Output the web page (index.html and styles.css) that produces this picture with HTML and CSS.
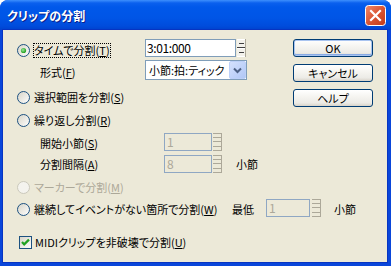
FILE: index.html
```html
<!DOCTYPE html>
<html lang="ja">
<head>
<meta charset="utf-8">
<title>クリップの分割</title>
<link rel="stylesheet" href="styles.css">
</head>
<body>
<svg class="defs" width="0" height="0" aria-hidden="true">
  <defs>
    <linearGradient id="rg" x1="0" y1="0" x2="1" y2="1">
      <stop offset="0" stop-color="#D6D3C6"/>
      <stop offset="1" stop-color="#FFFFFF"/>
    </linearGradient>
    <radialGradient id="dot" cx="0.4" cy="0.4" r="0.6">
      <stop offset="0" stop-color="#9BE89B"/>
      <stop offset="1" stop-color="#1E9E1E"/>
    </radialGradient>
    <linearGradient id="closeg" x1="0" y1="0" x2="1" y2="1">
      <stop offset="0" stop-color="#F08A6C"/>
      <stop offset="0.5" stop-color="#DA5533"/>
      <stop offset="1" stop-color="#C23A17"/>
    </linearGradient>
    <linearGradient id="ddg" x1="0" y1="0" x2="1" y2="1">
      <stop offset="0" stop-color="#D5E2FD"/>
      <stop offset="1" stop-color="#AFC6F6"/>
    </linearGradient>
  </defs>
</svg>
<div class="window">
  <div class="titlebar">
    <span class="title">クリップの分割</span>
    <svg class="close" width="21" height="21" viewBox="0 0 21 21">
      <rect x="0.5" y="0.5" width="20" height="20" rx="3" fill="url(#closeg)" stroke="#FFFFFF"/>
      <path d="M6 6 L15 15 M15 6 L6 15" stroke="#FFFFFF" stroke-width="2.2" stroke-linecap="square"/>
    </svg>
  </div>
  <div class="client">
    <div class="top">
      <div class="top-left">
        <div class="row r1">
          <div class="opt w128">
            <svg class="radio" width="13" height="13" viewBox="0 0 13 13"><circle cx="6.5" cy="6.5" r="6" fill="url(#rg)" stroke="#1C5180"/><circle cx="6.5" cy="6.5" r="2.6" fill="url(#dot)"/></svg>
            <span class="lbl focus">タイムで分割(<u>T</u>)</span>
          </div>
          <div class="edit w91">3:01:000</div>
          <svg class="spin" width="9" height="18" viewBox="0 0 9 18">
            <rect x="0" y="0" width="9" height="18" fill="#F3F2EC"/>
            <path d="M0 0.5 H9 M0 8.5 H9 M0 9.5 H9 M0 17.5 H9" stroke="#FFFFFF"/>
            <path d="M2 4.5 H7 M2 13.5 H7 M0 8.5 H9" stroke="#404040"/>
            <path d="M8.5 0 V18" stroke="#ACA899"/>
          </svg>
        </div>
        <div class="row r2">
          <div class="ind w128"><span class="lbl">形式(<u>F</u>)</span></div>
          <div class="select">
            <span class="seltext">小節:拍:ティック</span>
            <svg class="ddbtn" width="17" height="18" viewBox="0 0 17 18">
              <rect x="0.5" y="0.5" width="16" height="17" rx="1.5" fill="url(#ddg)" stroke="#BCD0F8"/>
              <path d="M5 7.5 L8.5 11 L12 7.5" stroke="#4D6185" stroke-width="2" fill="none"/>
            </svg>
          </div>
        </div>
        <div class="row r3">
          <div class="opt">
            <svg class="radio" width="13" height="13" viewBox="0 0 13 13"><circle cx="6.5" cy="6.5" r="6" fill="url(#rg)" stroke="#1C5180"/></svg>
            <span class="lbl">選択範囲を分割(<u>S</u>)</span>
          </div>
        </div>
      </div>
      <div class="buttons">
        <div class="btn default">OK</div>
        <div class="btn">キャンセル</div>
        <div class="btn">ヘルプ</div>
      </div>
    </div>

    <div class="row r4">
      <div class="opt">
        <svg class="radio" width="13" height="13" viewBox="0 0 13 13"><circle cx="6.5" cy="6.5" r="6" fill="url(#rg)" stroke="#1C5180"/></svg>
        <span class="lbl">繰り返し分割(<u>R</u>)</span>
      </div>
    </div>
    <div class="row r5">
      <div class="ind w147"><span class="lbl">開始小節(<u>S</u>)</span></div>
      <div class="edit disabled w48">1</div>
      <svg class="spin sp1" width="9" height="18" viewBox="0 0 9 18">
        <path d="M0 0.5 H8 M0 4.5 H8 M0 8.5 H8 M0 13.5 H8 M0 17.5 H8 M8.5 0 V18" stroke="#ACA899"/>
      </svg>
    </div>
    <div class="row r6">
      <div class="ind w147"><span class="lbl">分割間隔(<u>A</u>)</span></div>
      <div class="edit disabled w48">8</div>
      <svg class="spin sp1" width="9" height="18" viewBox="0 0 9 18">
        <path d="M0 0.5 H8 M0 4.5 H8 M0 8.5 H8 M0 13.5 H8 M0 17.5 H8 M8.5 0 V18" stroke="#ACA899"/>
      </svg>
      <span class="lbl unit1">小節</span>
    </div>
    <div class="row r7">
      <div class="opt">
        <svg class="radio" width="13" height="13" viewBox="0 0 13 13"><circle cx="6.5" cy="6.5" r="6" fill="#F4F3EE" stroke="#CAC8BB"/></svg>
        <span class="lbl dim">マーカーで分割(<u>M</u>)</span>
      </div>
    </div>
    <div class="row r8">
      <div class="opt w214">
        <svg class="radio" width="13" height="13" viewBox="0 0 13 13"><circle cx="6.5" cy="6.5" r="6" fill="url(#rg)" stroke="#1C5180"/></svg>
        <span class="lbl">継続してイベントがない箇所で分割(<u>W</u>)</span>
      </div>
      <span class="lbl w33">最低</span>
      <div class="edit disabled w44">1</div>
      <svg class="spin sp2" width="9" height="18" viewBox="0 0 9 18">
        <path d="M0 0.5 H8 M0 4.5 H8 M0 8.5 H8 M0 13.5 H8 M0 17.5 H8 M8.5 0 V18" stroke="#ACA899"/>
      </svg>
      <span class="lbl unit2">小節</span>
    </div>
    <div class="row r9">
      <svg class="check" width="13" height="13" viewBox="0 0 13 13">
        <rect x="0.5" y="0.5" width="12" height="12" fill="url(#rg)" stroke="#1C5180"/>
        <path d="M3 6 L5.2 8.4 L10 3.6" stroke="#21A121" stroke-width="2.2" fill="none"/>
      </svg>
      <span class="lbl cklbl">MIDIクリップを非破壊で分割(<u>U</u>)</span>
    </div>
  </div>
</div>
</body>
</html>
```

FILE: styles.css
```css
html, body {
  margin: 0;
  padding: 0;
  background: #FFFFFF;
}

body {
  font-family: "Noto Sans CJK JP", "Noto Sans", sans-serif;
  font-size: 11px;
  font-feature-settings: "palt";
  color: #000000;
}

.defs {
  display: block;
  width: 0;
  height: 0;
  overflow: hidden;
}

.window {
  width: 391px;
  height: 266px;
  display: flex;
  flex-direction: column;
  background: #0A46DA;
  border-radius: 8px 8px 0 0;
  overflow: hidden;
}

.titlebar {
  flex: none;
  height: 30px;
  box-sizing: border-box;
  display: flex;
  align-items: center;
  padding: 0 5px 0 7px;
  background: linear-gradient(to bottom, #3D8FFD 0, #0A60EE 3px, #0058EA 7px, #0055E6 18px, #004CDC 26px, #0042CC 30px);
}

.title {
  flex: 1;
  color: #FFFFFF;
  font-weight: bold;
  font-size: 12px;
  line-height: 15px;
  margin-top: 1px;
  text-shadow: 1px 1px 0 #0B1F8A;
}

.close {
  display: block;
  flex: none;
}

.client {
  flex: 1;
  margin: 0 4px 4px 3px;
  background: #ECE9D8;
  padding: 9px 0 0 14px;
  box-shadow: 0 0 0 1px #0734C2;
}

.top {
  display: flex;
  align-items: flex-start;
}

.top-left {
  display: flex;
  flex-direction: column;
}

.buttons {
  margin-left: auto;
  margin-right: 14px;
  width: 80px;
  display: flex;
  flex-direction: column;
  gap: 7px;
}

.btn {
  height: 18px;
  box-sizing: border-box;
  border: 1px solid #003C74;
  border-radius: 3px;
  background: linear-gradient(to bottom, #FFFFFF 0, #F6F5F1 40%, #ECEBE6 80%, #D8D3C9 100%);
  display: flex;
  align-items: center;
  justify-content: center;
  line-height: 14px;
}

.btn.default {
  box-shadow: inset 0 0 0 1px #A9C4F0, inset 0 -1px 0 1px #89ABE4;
}

.row {
  display: flex;
  align-items: center;
}

.r1 { height: 21px; }
.r2 { height: 24px; }
.r3 { height: 20px; margin-top: 3px; }
.r4 { height: 21px; margin-top: 3px; }
.r5 { height: 19px; margin-top: 2px; }
.r6 { height: 18px; margin-top: 3px; }
.r7 { height: 20px; margin-top: 4px; }
.r8 { height: 20px; margin-top: 2px; }
.r9 { height: 20px; margin-top: 13px; padding-left: 2px; }

.r1 .opt { margin-top: 2px; }

.opt {
  display: flex;
  align-items: center;
  flex: none;
}

.ind {
  flex: none;
  box-sizing: border-box;
  padding-left: 22px;
}

.w128 { width: 128px; }
.w147 { width: 147px; }
.w214 { width: 214px; }
.w33 { width: 33px; flex: none; }

.radio, .check {
  display: block;
  flex: none;
}

.lbl {
  line-height: 13px;
  border: 1px solid transparent;
  white-space: nowrap;
}

.opt .lbl {
  margin-left: 3px;
}

.focus {
  border: 1px dotted #000000;
}

.dim {
  color: #ACA899;
}

.cklbl {
  margin-left: 3px;
  border: none;
}

u {
  text-decoration: underline;
  text-underline-offset: 1px;
}

.edit {
  align-self: flex-start;
  flex: none;
  height: 18px;
  box-sizing: border-box;
  border: 1px solid #7F9DB9;
  background: #FFFFFF;
  padding-left: 1px;
  line-height: 15px;
  font-size: 12px;
  letter-spacing: -0.4px;
}

.edit.disabled {
  background: #ECE9D8;
  color: #ACA899;
  padding-left: 2px;
  border-color: #8FA7C3;
}

.w91 { width: 91px; }
.w48 { width: 48px; }
.w44 { width: 44px; }

.spin {
  align-self: flex-start;
  display: block;
  flex: none;
  margin-left: 1px;
}

.sp1 { margin-left: 1px; }
.sp2 { margin-left: 2px; }

.unit1 { margin-left: 13px; }
.unit2 { margin-left: 12px; }

.select {
  align-self: flex-start;
  flex: none;
  width: 102px;
  height: 20px;
  box-sizing: border-box;
  border: 1px solid #7F9DB9;
  background: #FFFFFF;
  display: flex;
  align-items: center;
  padding-left: 3px;
}

.seltext {
  flex: 1;
  line-height: 14px;
  white-space: nowrap;
}

.ddbtn {
  display: block;
  flex: none;
  margin-right: 0;
}
```
